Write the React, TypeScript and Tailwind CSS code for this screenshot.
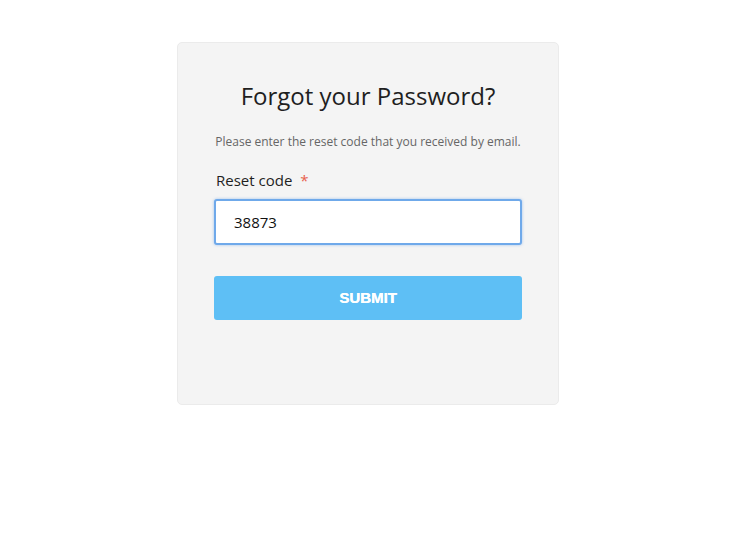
import React from "react";

export default function App() {
  return (
    <div className="w-[750px] h-[539px] bg-white overflow-hidden" style={{ fontFamily: '"Open Sans", sans-serif' }}>
      <div className="ml-[177px] mt-[42px] w-[382px] h-[363px] bg-[#f4f4f4] border border-[#ebebeb] rounded-[5px] px-[36px] pt-[37px]">
        <h1 className="text-center text-[24px] leading-[32px] text-[#1f1f1f] font-normal">Forgot your Password?</h1>
        <p className="mt-[22px] text-center text-[12px] leading-[16px] text-[#666666]">
          Please enter the reset code that you received by email.
        </p>
        <label className="block mt-[20px] pl-[2px] text-[15px] leading-[20px] text-[#1f1f1f]">
          Reset code <span className="ml-[4px] text-[#e8604c]">*</span>
        </label>
        <div className="mt-[9px] h-[46px] w-full bg-white border-2 border-[#6fa9ea] rounded-[3px] shadow-[0_0_3px_rgba(102,160,233,0.6)] flex items-center pl-[18px] text-[15px] text-[#111111]">
          38873
        </div>
        <button
          className="mt-[31px] h-[44px] w-full bg-[#5ebff5] rounded-[3px] text-white text-[15px] font-bold flex items-center justify-center [text-shadow:0.3px_0_0_#ffffff]"
          style={{ fontFamily: '"Liberation Sans", Arial, sans-serif' }}
        >
          SUBMIT
        </button>
      </div>
    </div>
  );
}
